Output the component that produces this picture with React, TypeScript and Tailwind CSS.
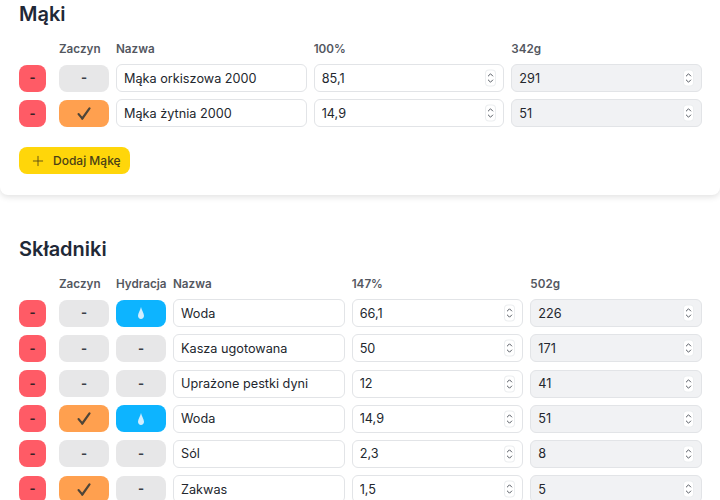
import React from 'react';
import { Plus } from 'lucide-react';

type Row = {
  name: string;
  pct: string;
  grams: string;
  starter?: boolean;
  hydration?: boolean;
};

const flours: Row[] = [
  { name: 'Mąka orkiszowa 2000', pct: '85,1', grams: '291' },
  { name: 'Mąka żytnia 2000', pct: '14,9', grams: '51', starter: true },
];

const ingredients: Row[] = [
  { name: 'Woda', pct: '66,1', grams: '226', hydration: true },
  { name: 'Kasza ugotowana', pct: '50', grams: '171' },
  { name: 'Uprażone pestki dyni', pct: '12', grams: '41' },
  { name: 'Woda', pct: '14,9', grams: '51', starter: true, hydration: true },
  { name: 'Sól', pct: '2,3', grams: '8' },
  { name: 'Zakwas', pct: '1,5', grams: '5', starter: true },
];

const Spinner = () => (
  <span className="pointer-events-none absolute right-[9px] top-1/2 flex h-[15px] w-[9px] -translate-y-1/2 items-center justify-center rounded-[3px] bg-white ring-1 ring-[#eceef0]">
    <svg width="7" height="13" viewBox="0 0 7 13" fill="none" stroke="#555a62" strokeWidth="1" strokeLinecap="round" strokeLinejoin="round">
      <path d="M1.300 4.500 3.500 2.300 5.700 4.500" />
      <path d="M1.300 8.500 3.500 10.700 5.700 8.500" />
    </svg>
  </span>
);

const NumberField = ({ value, muted }: { value: string; muted?: boolean }) => (
  <div className="relative min-w-0">
    <input
      readOnly
      value={value}
      className={`block h-7 w-full rounded-md border border-[#e2e4e7] px-[7px] text-[12.7px] text-[#23272e] outline-none ${
        muted ? 'bg-[#f1f2f4]' : 'bg-white'
      }`}
    />
    <Spinner />
  </div>
);

const Check = () => (
  <svg width="14" height="13" viewBox="0 0 14 13" fill="none" stroke="#4f4538" strokeLinecap="round" strokeLinejoin="round">
    <path d="M1.500 7 5.300 11.500" strokeWidth="2" />
    <path d="M5.300 11.500 12.500 1.300" strokeWidth="2.200" />
  </svg>
);

const Drop = () => (
  <svg width="6" height="12" viewBox="0 0 6 12">
    <path d="M3 0C3.500 2.800 6 6 6 8.800 6 10.600 4.700 12 3 12S0 10.600 0 8.800C0 6 2.500 2.800 3 0Z" fill="#d2eeff" />
  </svg>
);

const Toggle = ({ on, color, children }: { on?: boolean; color: string; children: React.ReactNode }) => (
  <button
    type="button"
    className={`flex h-[27px] w-[50px] items-center justify-center rounded-lg text-[13px] font-bold text-[#3a3f47] ${on ? color : 'bg-[#e7e7e8]'}`}
  >
    {on ? children : '-'}
  </button>
);

const Remove = () => (
  <button type="button" className="flex h-[27px] w-[27px] items-center justify-center rounded-lg bg-[#ff5b66] text-[13px] font-bold text-[#3a2226]">
    -
  </button>
);

const Label = ({ children }: { children?: React.ReactNode }) => (
  <div className="whitespace-nowrap text-[11.7px] font-semibold leading-4 text-[#53575f]">{children}</div>
);

export default function App() {
  return (
    <div className="h-[500px] w-[720px] overflow-hidden bg-white font-['Inter',sans-serif]">
      {/* Flours card */}
      <section className="h-[195px] rounded-b-lg bg-white pl-[19px] pr-[18px] pt-[2px] shadow-[0_2px_6px_rgba(0,0,0,0.12)]">
        <h2 className="text-[20px] font-semibold leading-6 text-[#1f2937]">Mąki</h2>
        <div className="mt-[15px] grid grid-cols-[33px_50px_1fr_1fr_1fr] items-center gap-x-[7px] gap-y-[7.2px]">
          <Label />
          <Label>Zaczyn</Label>
          <Label>Nazwa</Label>
          <Label>100%</Label>
          <Label>342g</Label>
          {flours.map((row) => (
            <React.Fragment key={row.name}>
              <Remove />
              <Toggle on={row.starter} color="bg-[#ffa04f]">
                <Check />
              </Toggle>
              <input
                readOnly
                value={row.name}
                className="h-7 min-w-0 rounded-md border border-[#e2e4e7] bg-white px-[7px] text-[12.7px] text-[#23272e] outline-none"
              />
              <NumberField value={row.pct} />
              <NumberField value={row.grams} muted />
            </React.Fragment>
          ))}
        </div>
        <button
          type="button"
          className="mt-[20px] flex h-[27px] w-[111px] items-center gap-[7px] rounded-lg bg-[#ffd60a] pl-[11px] text-[12px] font-medium text-[#4a3f16]"
        >
          <Plus size={16} strokeWidth={1.25} />
          Dodaj Mąkę
        </button>
      </section>

      {/* Ingredients card */}
      <section className="pl-[19px] pr-[18px] pt-[42px]">
        <h2 className="text-[20px] font-semibold leading-6 text-[#1f2937]">Składniki</h2>
        <div className="mt-[15px] grid grid-cols-[33px_50px_50px_1fr_1fr_1fr] items-center gap-x-[7px] gap-y-[7.2px]">
          <Label />
          <Label>Zaczyn</Label>
          <Label>Hydracja</Label>
          <Label>Nazwa</Label>
          <Label>147%</Label>
          <Label>502g</Label>
          {ingredients.map((row, i) => (
            <React.Fragment key={i}>
              <Remove />
              <Toggle on={row.starter} color="bg-[#ffa04f]">
                <Check />
              </Toggle>
              <Toggle on={row.hydration} color="bg-[#0db4ff]">
                <Drop />
              </Toggle>
              <input
                readOnly
                value={row.name}
                className="h-7 min-w-0 rounded-md border border-[#e2e4e7] bg-white px-[7px] text-[12.7px] text-[#23272e] outline-none"
              />
              <NumberField value={row.pct} />
              <NumberField value={row.grams} muted />
            </React.Fragment>
          ))}
        </div>
      </section>
    </div>
  );
}
